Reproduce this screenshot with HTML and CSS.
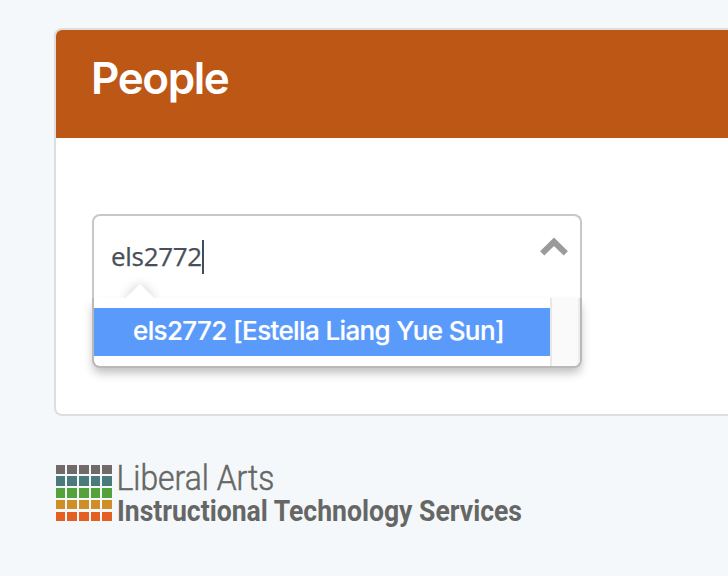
FILE: index.html
```html
<!DOCTYPE html>
<html lang="en">
<head>
<meta charset="utf-8">
<title>People</title>
<link rel="stylesheet" href="styles.css">
</head>
<body>
<main class="card">
  <header class="card-header"><h1>People</h1></header>
  <div class="card-body">
    <div class="combo">
      <div class="combo-input">
        <span class="value">els2772</span><span class="caret"></span>
        <svg class="chevron" width="30" height="22" viewBox="0 0 30 22"><path d="M3.2 17.3 15 5.8l11.8 11.5" fill="none" stroke="#9b9b9b" stroke-width="6"/></svg>
        <span class="pointer"></span>
      </div>
      <div class="menu">
        <div class="options"><div class="option">els2772 [Estella Liang Yue Sun]</div></div>
        <div class="scrollbar"></div>
      </div>
    </div>
  </div>
</main>
<footer class="brand">
  <div class="mosaic">
    <i class="gray"></i><i class="gray"></i><i class="gray"></i><i class="gray"></i><i class="gray"></i>
    <i class="teal"></i><i class="teal"></i><i class="teal"></i><i class="teal"></i><i class="teal"></i>
    <i class="green"></i><i class="green"></i><i class="green"></i><i class="green"></i><i class="green"></i>
    <i class="gold"></i><i class="gold"></i><i class="gold"></i><i class="gold"></i><i class="gold"></i>
    <i class="orange"></i><i class="orange"></i><i class="orange"></i><i class="orange"></i><i class="orange"></i>
  </div>
  <svg class="wordmark" width="600" height="90" viewBox="0 0 600 90">
    <text class="light" x="2.5" y="30.5" textLength="158" lengthAdjust="spacingAndGlyphs">Liberal Arts</text>
    <text class="strong" x="3" y="62" textLength="405" lengthAdjust="spacingAndGlyphs">Instructional Technology Services</text>
  </svg>
</footer>
</body>
</html>
```
FILE: styles.css
```css
* { box-sizing: border-box; }
body {
  margin: 0;
  padding: 28px 0 0 54px;
  width: 728px;
  height: 576px;
  overflow: hidden;
  background: #f4f8fb;
  font-family: Inter, "Liberation Sans", sans-serif;
}
.card {
  height: 388px;
  background: #fff;
  border: 2px solid #dededd;
  border-right: 0;
  border-radius: 8px 0 0 8px;
  overflow: hidden;
}
.card-header {
  height: 108px;
  padding: 21px 35px;
  background: #bc5716;
}
h1 {
  margin: 0;
  color: #fff;
  font-size: 44px;
  font-weight: 600;
  line-height: 54px;
  letter-spacing: -1.4px;
}
.card-body { padding: 76px 36px; }
.combo { width: 490px; }
.combo-input {
  position: relative;
  display: flex;
  height: 84px;
  padding: 24px 11px 0 17px;
  border: 2px solid #c8c8c8;
  border-bottom: 0;
  border-radius: 8px 8px 0 0;
  color: #484f59;
  font-family: "Open Sans", sans-serif;
  font-size: 26px;
  line-height: 32px;
}
.value {
  letter-spacing: -0.3px;
  -webkit-text-stroke: 0.25px #484f59;
}
.caret { width: 2px; height: 34px; background: #454c59; }
.chevron { margin: -4px 0 0 auto; }
.pointer {
  position: absolute;
  left: 26px;
  bottom: 0;
  width: 40px;
  height: 28px;
  overflow: hidden;
}
.pointer::after {
  content: "";
  position: absolute;
  left: 10px;
  top: 18px;
  width: 20px;
  height: 20px;
  background: #fff;
  transform: rotate(45deg);
  box-shadow: 0 0 12px rgba(0, 0, 0, .2);
}
.menu {
  display: flex;
  height: 70px;
  border: 2px solid #b9b9b9;
  border-top: 0;
  border-radius: 0 0 8px 8px;
  background: #fff;
  box-shadow: 0 6px 10px -1px rgba(0, 0, 0, .25);
}
.options { width: 456px; padding-top: 10px; }
.option {
  height: 48px;
  padding-left: 39px;
  background: #5a9afa;
  color: #fff;
  font-size: 26px;
  font-weight: 500;
  line-height: 46px;
  letter-spacing: -0.63px;
  white-space: nowrap;
  -webkit-text-stroke: 0.2px #fff;
}
.scrollbar {
  flex: 1;
  background: #fafafa;
  border-left: 2px solid #e7e7e7;
  border-right: 2px solid #ededed;
  border-radius: 0 0 6px;
}
.brand { display: flex; padding: 43px 0 0 1.6px; }
.mosaic {
  display: grid;
  flex: none;
  grid-template-columns: repeat(5, 9.6px);
  grid-auto-rows: 9.6px;
  gap: 2.1px;
  width: 58.4px;
  height: 57px;
  margin-top: 5.8px;
}
.gray { background: #706b69; }
.teal { background: #4a7b7a; }
.green { background: #54a239; }
.gold { background: #d08e27; }
.orange { background: #e45f22; }
.wordmark { flex: none; overflow: visible; fill: #666765; font-family: Roboto, sans-serif; }
.light { font-size: 34.5px; font-weight: 300; stroke: #666765; stroke-width: .5px; }
.strong { font-size: 29px; font-weight: 700; }
```
